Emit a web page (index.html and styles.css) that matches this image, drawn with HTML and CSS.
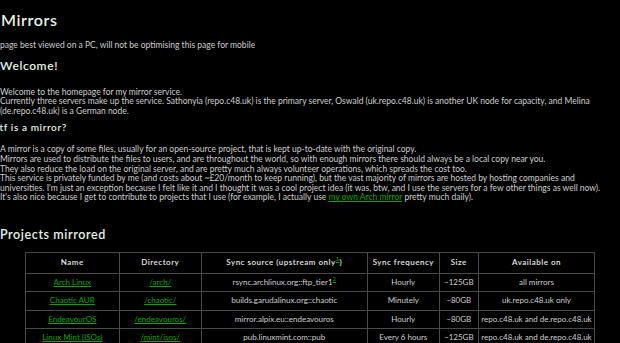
FILE: index.html
```html
<!DOCTYPE html>
<html lang="en">
<head>
    <meta charset="UTF-8">
    <meta name="viewport" content="width=device-width, initial-scale=1.0">
    <title>Mirrors</title>
    <link rel="stylesheet" href="styles.css">
</head>
<body>
<h1>Mirrors</h1>
<p>page best viewed on a PC, will not be optimising this page for mobile</p>

<h2>Welcome!</h2>
<p>Welcome to the homepage for my mirror service.<br>
Currently three servers make up the service. Sathonyia (repo.c48.uk) is the primary server, Oswald (uk.repo.c48.uk) is another UK node for capacity, and Melina (de.repo.c48.uk) is a German node.</p>

<h3 class="clipped">wtf is a mirror?</h3>
<p>A mirror is a copy of some files, usually for an open-source project, that is kept up-to-date with the original copy.<br>
Mirrors are used to distribute the files to users, and are throughout the world, so with enough mirrors there should always be a local copy near you.<br>
They also reduce the load on the original server, and are pretty much always volunteer operations, which spreads the cost too.<br>
This service is privately funded by me (and costs about ~£20/month to keep running), but the vast majority of mirrors are hosted by hosting companies and universities. I'm just an exception because I felt like it and I thought it was a cool project idea (it was, btw, and I use the servers for a few other things as well now).<br>
It's also nice because I get to contribute to projects that I use (for example, I actually use <a href="#">my own Arch mirror</a> pretty much daily).</p>

<h2 class="projects">Projects mirrored</h2>
<table>
    <tr>
        <th class="c-name">Name</th>
        <th class="c-dir">Directory</th>
        <th class="c-src">Sync source (upstream only<sup><a href="#">1</a></sup>)</th>
        <th class="c-freq">Sync frequency</th>
        <th class="c-size">Size</th>
        <th>Available on</th>
    </tr>
    <tr>
        <td><a href="#">Arch Linux</a></td>
        <td><a href="#">/arch/</a></td>
        <td>rsync.archlinux.org::ftp_tier1<sup><a href="#">2</a></sup></td>
        <td>Hourly</td>
        <td>~125GB</td>
        <td>all mirrors</td>
    </tr>
    <tr>
        <td><a href="#">Chaotic AUR</a></td>
        <td><a href="#">/chaotic/</a></td>
        <td>builds.garudalinux.org::chaotic</td>
        <td>Minutely</td>
        <td>~80GB</td>
        <td>uk.repo.c48.uk only</td>
    </tr>
    <tr>
        <td><a href="#">EndeavourOS</a></td>
        <td><a href="#">/endeavouros/</a></td>
        <td>mirror.alpix.eu::endeavouros</td>
        <td>Hourly</td>
        <td>~80GB</td>
        <td>repo.c48.uk and de.repo.c48.uk</td>
    </tr>
    <tr>
        <td><a href="#">Linux Mint (ISOs)</a></td>
        <td><a href="#">/mint/isos/</a></td>
        <td>pub.linuxmint.com::pub</td>
        <td>Every 6 hours</td>
        <td>~125GB</td>
        <td>repo.c48.uk and de.repo.c48.uk</td>
    </tr>
</table>
</body>
</html>
```

FILE: styles.css
```css
body {
    margin: 0;
    background-color: #000;
    color: #cfcfcf;
    font-family: Lato, "Open Sans", sans-serif;
    font-size: 8.5px;
    line-height: 9.6px;
}
h1, h2, h3 {
    color: #e4f2e4;
    font-weight: 600;
    letter-spacing: 0.6px;
}
h1 {
    font-size: 16px;
    line-height: 22px;
    margin: 9px 0 0 1px;
}
h2 {
    font-size: 12px;
    line-height: 16px;
    margin: 7px 0 14px 0;
}
h3 {
    font-size: 10px;
    line-height: 14px;
    margin: 4px 0 11px 0;
}
.clipped {
    margin-left: -9px;
}
p {
    margin: 10px 0 0 0;
}
a {
    color: #00a800;
}
.projects {
    font-size: 12.5px;
    margin-top: 24px;
    margin-bottom: 9px;
}
table {
    width: 92%;
    margin: 0 auto;
    border-collapse: collapse;
    table-layout: fixed;
    font-size: 8px;
}
th, td {
    border: 1px solid #4a4a4a;
    text-align: center;
    padding: 5px 1px;
    white-space: nowrap;
    overflow: hidden;
}
th {
    color: #e8e8e8;
    font-weight: 600;
    letter-spacing: 0.5px;
}
td {
    padding: 4px 1px;
}
sup {
    font-size: 6px;
    line-height: 0;
}
.c-name { width: 91px; }
.c-dir { width: 79px; }
.c-src { width: 163px; }
.c-freq { width: 69px; }
.c-size { width: 36px; }
```
